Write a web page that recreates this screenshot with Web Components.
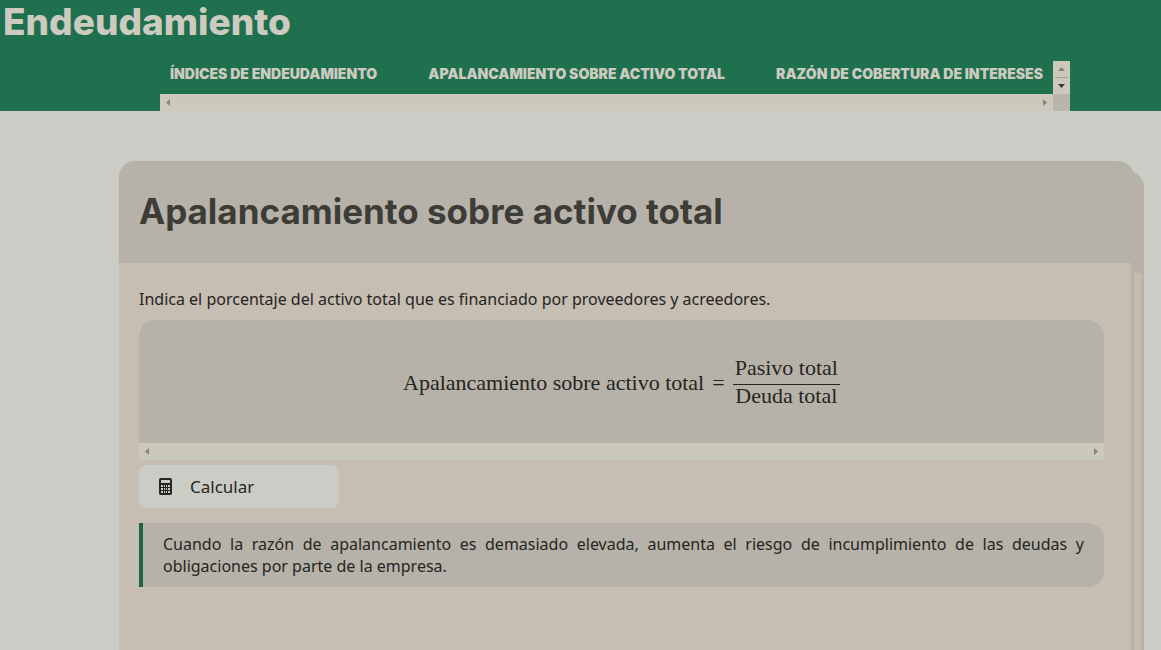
<!DOCTYPE html>
<html lang="es">
<head>
<meta charset="utf-8">
<title>Endeudamiento</title>
<meta name="viewport" content="width=device-width, initial-scale=1">
<style>
  :root {
    --green: #1f704e;
    --page: #cbccc6;
    --panel: #b6b2a9;
    --card: #c6bdb3;
    --track: #cbc9bc;
    --ink: #252521;
    --display: Inter, sans-serif;
    --text: "Noto Sans", sans-serif;
  }
  body { margin: 0; background: var(--page); color: var(--ink); font: 16px/22px var(--text); }
</style>
</head>
<body>
<study-page>
  <site-header slot="header" heading="Endeudamiento">
    <nav-link href="#indices">Índices de endeudamiento</nav-link>
    <nav-link href="#apalancamiento">Apalancamiento sobre activo total</nav-link>
    <nav-link href="#cobertura">Razón de cobertura de intereses</nav-link>
  </site-header>
  <topic-card id="apalancamiento">
    <span slot="title">Apalancamiento sobre activo total</span>
    <p style="margin:0 0 10px">Indica el porcentaje del activo total que es financiado por proveedores y acreedores.</p>
    <formula-box>
      <span slot="name">Apalancamiento sobre activo total</span>
      <span slot="top">Pasivo total</span>
      <span slot="bottom">Deuda total</span>
    </formula-box>
    <calc-button>Calcular</calc-button>
    <note-box>Cuando la razón de apalancamiento es demasiado elevada, aumenta el riesgo de incumplimiento de las deudas y obligaciones por parte de la empresa.</note-box>
  </topic-card>
</study-page>

<script>
const define = (name, html, setup) => customElements.define(name, class extends HTMLElement {
  constructor() {
    super();
    this.attachShadow({ mode: "open" }).innerHTML = html;
  }
  connectedCallback() { if (setup) setup(this, this.shadowRoot); }
});

define("study-page", `
  <style>
    :host { display: flex; flex-direction: column; height: 100vh; overflow: hidden; }
    main { flex: 1; display: flex; min-height: 0; padding: 50px 27px 0 119px; }
    ::slotted(topic-card) { flex: 1; }
  </style>
  <slot name="header"></slot>
  <main><slot></slot></main>`);

define("scroll-track", `
  <style>
    :host { display: flex; justify-content: space-between; align-items: center; height: 17px; padding: 0 5px;
      box-sizing: border-box; background: var(--track); }
    :host([vertical]) { flex-direction: column; width: 17px; height: auto; padding: 5px 0; }
    svg { display: block; width: 7px; height: 7px; fill: #87847a; }
    .rule { display: none; }
    :host([vertical]) .rule { display: block; width: 13px; height: 1px; background: #a19e93; }
    :host([vertical]) svg { transform: rotate(90deg); }
    :host([vertical]) svg:last-child { fill: #3a3a32; }
  </style>
  <svg viewBox="0 0 7 7"><path d="M5 0v7L1 3.5z"/></svg>
  <span class="rule"></span>
  <svg viewBox="0 0 7 7"><path d="M2 0v7L6 3.5z"/></svg>`);

define("site-header", `
  <style>
    :host { display: block; background: var(--green); color: #cdcac0; }
    h1 { margin: 0; padding: 0 3px; font: 800 37px/44px var(--display); }
    .frame { display: grid; grid-template-columns: 1fr 17px; margin: 17px 91px 0 160px; }
    nav { display: flex; justify-content: space-between; align-items: center; height: 33px; padding: 0 10px 8px;
      box-sizing: border-box; overflow: hidden; }
    .corner { background: #b9b4ac; }
  </style>
  <h1></h1>
  <div class="frame">
    <nav><slot></slot></nav>
    <scroll-track vertical></scroll-track>
    <scroll-track></scroll-track>
    <div class="corner"></div>
  </div>`, (el, root) => { root.querySelector("h1").textContent = el.getAttribute("heading"); });

define("nav-link", `
  <style>
    :host { display: block; }
    a { color: inherit; text-decoration: none; text-transform: uppercase; white-space: nowrap;
      font: 900 14px/24px var(--display); }
  </style>
  <a><slot></slot></a>`, (el, root) => { root.querySelector("a").href = el.getAttribute("href"); });

define("topic-card", `
  <style>
    :host { display: flex; position: relative; min-width: 0; }
    .back, .front { border-right: 3px solid var(--panel); border-radius: 16px 16px 0 0; box-sizing: border-box; overflow: hidden; }
    .back { position: absolute; inset: 10px -10px 0 10px; background: linear-gradient(var(--panel) 102px, #c2bdb0 102px); }
    .front { position: relative; flex: 1; min-width: 0; background: linear-gradient(var(--panel) 102px, var(--card) 102px); }
    h2 { margin: 0; padding: 26px 20px 28px; color: #3d3c37; font: 700 35px/48px var(--display); }
    .body { padding: 25px 27px 25px 20px; }
  </style>
  <div class="back"></div>
  <article class="front">
    <h2><slot name="title"></slot></h2>
    <div class="body"><slot></slot></div>
  </article>`);

define("formula-box", `
  <style>
    :host { display: block; margin-bottom: 5px; background: var(--panel); border-radius: 16px 16px 0 0; overflow: hidden; }
    .math { display: flex; justify-content: center; align-items: center; gap: 8px; padding: 34px 20px 32px;
      font: 22px/28px "Liberation Serif", serif; white-space: nowrap; }
    .fraction { display: flex; flex-direction: column; text-align: center; }
    .fraction .top { border-bottom: 1px solid var(--ink); padding: 0 2px 2px; }
    .fraction .low { height: 26px; line-height: 22px; }
  </style>
  <div class="math">
    <slot name="name"></slot><span>=</span>
    <div class="fraction">
      <div class="top"><slot name="top"></slot></div>
      <div class="low"><slot name="bottom"></slot></div>
    </div>
  </div>
  <scroll-track></scroll-track>`);

define("calc-button", `
  <style>
    :host { display: block; margin-bottom: 15px; }
    button { display: flex; align-items: center; gap: 18px; width: 200px; height: 43px; padding: 0 20px; border: 0;
      border-radius: 8px; background: var(--page); color: var(--ink); font: 17px/24px var(--text); }
    svg { display: block; width: 13px; height: 17px; }
  </style>
  <button type="button">
    <svg viewBox="0 0 13 17" aria-hidden="true">
      <rect width="13" height="17" rx="1.8" fill="#252521"/>
      <path d="M2 2h9v3H2zM2 7h2v2H2zM5 7h1v2H5zM7 7h1v2H7zM9 7h2v2H9zM2 10h2v2H2zM5 10h1v2H5zM7 10h1v2H7zM9 10h2v2H9zM2 13h2v2H2zM5 13h1v2H5zM7 13h1v2H7zM9 13h2v2H9z" fill="#cbccc6"/>
    </svg>
    <slot></slot>
  </button>`);

define("note-box", `
  <style>
    :host { display: block; padding: 10px 20px; border-left: 4px solid #1d6545; border-radius: 0 16px 16px 0;
      background: var(--panel); text-align: justify; }
  </style>
  <slot></slot>`);
</script>
</body>
</html>
